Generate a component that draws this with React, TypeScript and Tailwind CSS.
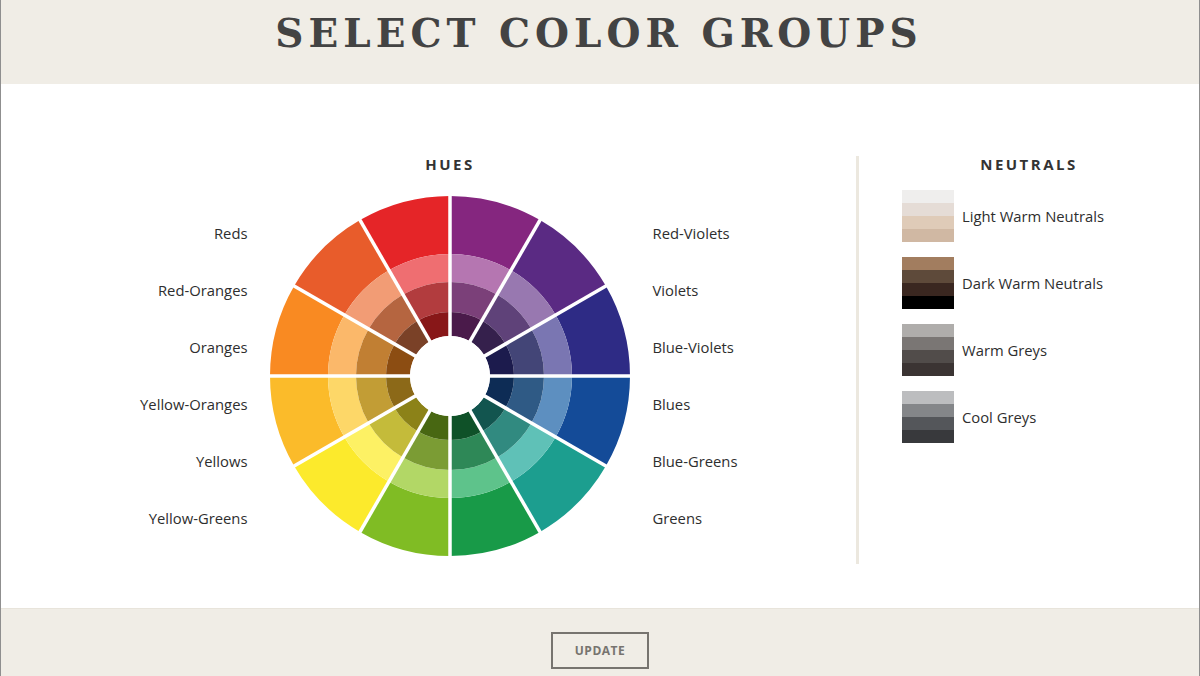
import React from 'react';

const sans = { fontFamily: '"Open Sans", "Liberation Sans", sans-serif' };

// clockwise from 12 o'clock: [outer, light, mid, dark]
const hues: string[][] = [
    ['#85267f', '#b576b1', '#7b4079', '#4a1a4a'], // red-violet
    ['#5a2a83', '#9878b0', '#5f4279', '#35204c'], // violet
    ['#2e2b85', '#7a76b2', '#434577', '#1c1b4d'], // blue-violet
    ['#144b98', '#5d8fc0', '#2f5a85', '#0d2c55'], // blue
    ['#1c9e8f', '#5fc1b7', '#318a80', '#12554f'], // blue-green
    ['#189a48', '#5ec38b', '#2e8857', '#0f5128'], // green
    ['#80bc24', '#b2d766', '#7b9c34', '#486712'], // yellow-green
    ['#fcea2c', '#fdf164', '#c4bb3a', '#8c8218'], // yellow
    ['#fbbb2a', '#fdd768', '#c29d35', '#8c6918'], // yellow-orange
    ['#f98a22', '#fbb86a', '#c17f33', '#8c4d12'], // orange
    ['#e85c2b', '#f29c75', '#b56540', '#7a4127'], // red-orange
    ['#e52528', '#ef6e71', '#b23c3e', '#881718'], // red
];

const rings: [number, number][] = [
    [122, 180],
    [94, 122],
    [64, 94],
    [40, 64],
];

const leftLabels = ['Reds', 'Red-Oranges', 'Oranges', 'Yellow-Oranges', 'Yellows', 'Yellow-Greens'];
const rightLabels = ['Red-Violets', 'Violets', 'Blue-Violets', 'Blues', 'Blue-Greens', 'Greens'];

const neutrals = [
    { name: 'Light Warm Neutrals', colors: ['#efeeed', '#e5dcd6', '#dfcbb8', '#d0b8a3'] },
    { name: 'Dark Warm Neutrals', colors: ['#a27d5f', '#5e4a3a', '#3a2720', '#000000'] },
    { name: 'Warm Greys', colors: ['#afadab', '#7a7674', '#514c4a', '#3b3433'] },
    { name: 'Cool Greys', colors: ['#bcbdbf', '#848689', '#54565a', '#38393c'] },
];

function pt(r: number, deg: number) {
    const a = (deg * Math.PI) / 180;
    return `${(r * Math.sin(a)).toFixed(2)} ${(-r * Math.cos(a)).toFixed(2)}`;
}

function sector(r1: number, r2: number, a1: number, a2: number) {
    return `M ${pt(r2, a1)} A ${r2} ${r2} 0 0 1 ${pt(r2, a2)} L ${pt(r1, a2)} A ${r1} ${r1} 0 0 0 ${pt(r1, a1)} Z`;
}

function ColorWheel() {
    return (
        <svg width="360" height="360" viewBox="-180 -180 360 360" className="shrink-0">
            {hues.map((set, i) =>
                rings.map(([r1, r2], j) => (
                    <path key={`${i}-${j}`} d={sector(r1, r2, i * 30, (i + 1) * 30)} fill={set[j]} />
                ))
            )}
            {/* white gaps between segments */}
            {[0, 30, 60, 90, 120, 150].map((deg) => {
                const a = (deg * Math.PI) / 180;
                return (
                    <line
                        key={deg}
                        x1={-182 * Math.sin(a)}
                        y1={182 * Math.cos(a)}
                        x2={182 * Math.sin(a)}
                        y2={-182 * Math.cos(a)}
                        stroke="#fff"
                        strokeWidth={3.5}
                    />
                );
            })}
            <circle cx="0" cy="0" r="40" fill="#fff" />
        </svg>
    );
}

export default function App() {
    return (
        <div className="w-[1200px] h-[676px] flex flex-col bg-white border-x border-[#8f8f8f] overflow-hidden" style={sans}>
            {/* Header */}
            <div className="h-[84px] shrink-0 bg-[#f0ede6] flex justify-center pt-[9px]">
                <h1
                    className="text-[39px] leading-[48px] font-bold tracking-[5px] text-[#434343] pr-[2px]"
                    style={{ fontFamily: '"DejaVu Serif", serif' }}
                >
                    SELECT COLOR GROUPS
                </h1>
            </div>

            {/* Body */}
            <div className="flex-1 flex">
                {/* Hues */}
                <div className="w-[855px] shrink-0 pl-[107px] pt-[70px]">
                    <div className="w-[684px]">
                        <h2 className="text-center text-[15px] leading-[20px] font-bold tracking-[2.5px] text-[#333]">HUES</h2>
                        <div className="mt-[22px] flex items-center">
                            <div className="w-[140px] flex flex-col items-end">
                                {leftLabels.map((l) => (
                                    <div key={l} className="h-[57px] flex items-center text-[14.8px] text-[#2e2e2e] whitespace-nowrap">{l}</div>
                                ))}
                            </div>
                            <div className="ml-[22px] mr-[23px]">
                                <ColorWheel />
                            </div>
                            <div className="w-[140px] flex flex-col items-start">
                                {rightLabels.map((l) => (
                                    <div key={l} className="h-[57px] flex items-center text-[14.8px] text-[#2e2e2e] whitespace-nowrap">{l}</div>
                                ))}
                            </div>
                        </div>
                    </div>
                </div>

                {/* Divider */}
                <div className="w-[3px] mt-[72px] h-[408px] bg-[#ece8df]" />

                {/* Neutrals */}
                <div className="flex-1 pt-[70px]">
                    <h2 className="text-center text-[15px] leading-[20px] font-bold tracking-[2.5px] text-[#333]">NEUTRALS</h2>
                    <div className="mt-[16px] pl-[43px] flex flex-col gap-[15px]">
                        {neutrals.map((n) => (
                            <div key={n.name} className="flex items-center gap-[8px]">
                                <div className="w-[52px] flex flex-col">
                                    {n.colors.map((c) => (
                                        <div key={c} className="h-[13px]" style={{ backgroundColor: c }} />
                                    ))}
                                </div>
                                <span className="text-[14.8px] text-[#2e2e2e] whitespace-nowrap">{n.name}</span>
                            </div>
                        ))}
                    </div>
                </div>
            </div>

            {/* Footer */}
            <div className="h-[68px] shrink-0 bg-[#f0ede6] border-t border-[#e8e4db] flex justify-center pt-[23px]">
                <button className="w-[98px] h-[37px] border-2 border-[#77746f] text-[12px] font-bold tracking-[0.5px] text-[#77746f]">
                    UPDATE
                </button>
            </div>
        </div>
    );
}
